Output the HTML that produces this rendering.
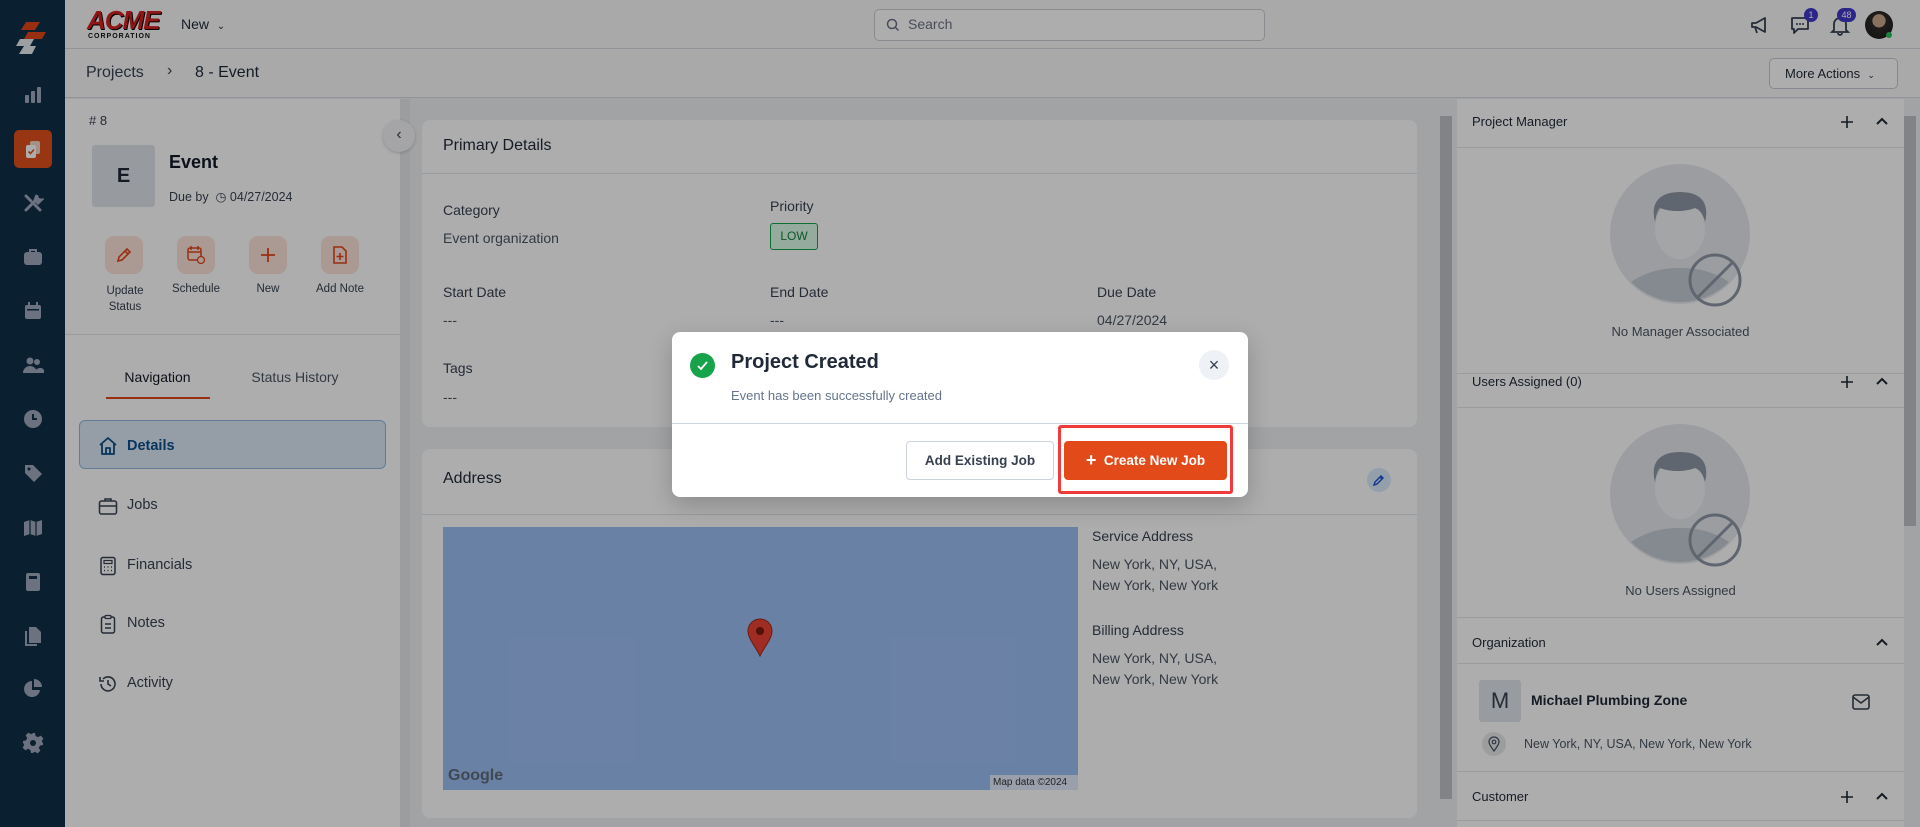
<!DOCTYPE html>
<html><head><meta charset="utf-8"><style>
*{box-sizing:border-box;margin:0;padding:0}
body{width:1920px;height:827px;overflow:hidden;font-family:"Liberation Sans",Arial,sans-serif;background:#eef0f3;position:relative;color:#1f2937}
.abs{position:absolute}
.side{left:0;top:0;width:65px;height:827px;background:#102e47}
.top{left:65px;top:0;width:1855px;height:49px;background:#f9fafb;border-bottom:1px solid #d5d9e0}
.bc{left:65px;top:49px;width:1855px;height:49px;background:#f9fafb;border-bottom:1px solid #d5d9e0}
.card{background:#fff;border-radius:8px}
.lbl{font-size:14px;color:#374151}
.val{font-size:14px;color:#4b5563}
.sicon{position:absolute;left:22px;width:22px;height:22px}
.hr{position:absolute;height:1px;background:#e2e5ea}
</style></head><body>

<!-- sidebar -->
<div class="abs side">
  <svg class="abs" style="left:14px;top:20px" width="36" height="36" viewBox="0 0 36 36"><path d="M12 2h14l-5 8H7z" fill="#e0461a"/><path d="M14 12h18l-4 7H10z" fill="#e0461a"/><path d="M6 19h14l-4 7H2z" fill="#e8ecf0"/><path d="M10 26h12l-4 8H5z" fill="#e8ecf0"/></svg>
  <svg class="sicon" style="top:84px" viewBox="0 0 22 22"><rect x="3" y="11" width="4" height="8" rx="1" fill="#9fa9bb"/><rect x="9" y="7" width="4" height="12" rx="1" fill="#9fa9bb"/><rect x="15" y="3" width="4" height="16" rx="1" fill="#9fa9bb"/></svg>
  <div class="abs" style="left:14px;top:130px;width:38px;height:38px;border-radius:5px;background:#e0501c"></div>
  <svg class="sicon" style="top:138px" viewBox="0 0 22 22"><rect x="8" y="3" width="10" height="13" rx="2" fill="#f3d5c8"/><rect x="4" y="7" width="10" height="13" rx="2" fill="#fff"/><path d="M6.5 13.5l2 2 3.5-4" stroke="#e0501c" stroke-width="1.6" fill="none"/></svg>
  <svg class="sicon" style="top:192px" viewBox="0 0 22 22"><path d="M4 18L14 8M15 3a4 4 0 0 0 4 5l-3 3-3-3zM4 4l5 5M13 13l5 5" stroke="#9fa9bb" stroke-width="3" stroke-linecap="round" fill="none"/></svg>
  <svg class="sicon" style="top:246px" viewBox="0 0 22 22"><rect x="2" y="6" width="18" height="13" rx="3" fill="#9fa9bb"/><path d="M8 6V4h6v2" stroke="#9fa9bb" stroke-width="2" fill="none"/></svg>
  <svg class="sicon" style="top:300px" viewBox="0 0 22 22"><rect x="3" y="5" width="16" height="14" rx="2" fill="#9fa9bb"/><rect x="6" y="2" width="2" height="5" fill="#9fa9bb"/><rect x="14" y="2" width="2" height="5" fill="#9fa9bb"/><rect x="5" y="9" width="12" height="1.5" fill="#102e47"/></svg>
  <svg class="sicon" style="top:354px" viewBox="0 0 22 22"><circle cx="8" cy="7" r="3.5" fill="#9fa9bb"/><circle cx="15" cy="8" r="3" fill="#9fa9bb"/><path d="M1 19a7 7 0 0 1 14 0zM13 19a5 5 0 0 1 9-3v3z" fill="#9fa9bb"/></svg>
  <svg class="sicon" style="top:408px" viewBox="0 0 22 22"><circle cx="11" cy="11" r="9" fill="#9fa9bb"/><path d="M11 6v5h4" stroke="#102e47" stroke-width="2" fill="none"/></svg>
  <svg class="sicon" style="top:462px" viewBox="0 0 22 22"><path d="M3 3h8l9 9-8 8-9-9z" fill="#9fa9bb"/><circle cx="7" cy="7" r="1.5" fill="#102e47"/></svg>
  <svg class="sicon" style="top:517px" viewBox="0 0 22 22"><path d="M2 5l6-2 6 2 6-2v14l-6 2-6-2-6 2z" fill="#9fa9bb"/><path d="M8 3v14M14 5v14" stroke="#102e47" stroke-width="1.2"/></svg>
  <svg class="sicon" style="top:571px" viewBox="0 0 22 22"><rect x="4" y="2" width="14" height="18" rx="2" fill="#9fa9bb"/><rect x="7" y="5" width="8" height="3" fill="#102e47"/></svg>
  <svg class="sicon" style="top:625px" viewBox="0 0 22 22"><path d="M7 2h7l5 5v11H7z" fill="#9fa9bb"/><path d="M4 6v14h11" stroke="#9fa9bb" stroke-width="2" fill="none"/></svg>
  <svg class="sicon" style="top:678px" viewBox="0 0 22 22"><path d="M10 3a8 8 0 1 0 8 9h-8z" fill="#9fa9bb"/><path d="M12 1a8 8 0 0 1 8 8h-8z" fill="#9fa9bb"/></svg>
  <svg class="sicon" style="top:732px" viewBox="0 0 22 22"><path d="M9 1h4l.6 3 2.4 1.2 2.6-1.6 2.8 2.8-1.6 2.6L21 11.4 21 13l-3 .6-1.2 2.4 1.6 2.6-2.8 2.8-2.6-1.6-2.4 1.2L10 21H9l-.6-3-2.4-1.2-2.6 1.6-2.8-2.8 1.6-2.6L1 10.6V9l3-.6 1.2-2.4-1.6-2.6 2.8-2.8 2.6 1.6L11.4 1z" fill="#9fa9bb"/><circle cx="11" cy="11" r="3" fill="#102e47"/></svg>
</div>

<!-- topbar -->
<div class="abs top">
  <div class="abs" style="left:22px;top:8px;font:900 26px 'Liberation Sans';color:#d51f1f;letter-spacing:-1px;font-style:italic;line-height:24px;text-shadow:1px 1px 0 #000">ACME</div>
  <div class="abs" style="left:23px;top:33px;font:900 7px 'Liberation Sans';color:#111;letter-spacing:1px">CORPORATION</div>
  <div class="abs" style="left:116px;top:16px;font-size:14px;color:#1f2937">New &nbsp;<span style="font-size:10px">&#8964;</span></div>
  <div class="abs" style="left:809px;top:9px;width:391px;height:32px;border:1px solid #c9ced6;border-radius:5px;background:#fff"></div>
  <svg class="abs" style="left:821px;top:18px" width="14" height="14" viewBox="0 0 14 14"><circle cx="6" cy="6" r="4.5" stroke="#6b7280" stroke-width="1.5" fill="none"/><path d="M9.5 9.5l3 3" stroke="#6b7280" stroke-width="1.5"/></svg>
  <div class="abs" style="left:843px;top:16px;font-size:14px;color:#6b7280">Search</div>
  <svg class="abs" style="left:1684px;top:14px" width="22" height="22" viewBox="0 0 22 22"><path d="M3 9h4l9-5v14l-9-5H3zM6 13l2 6" stroke="#374151" stroke-width="1.8" fill="none" stroke-linejoin="round"/></svg>
  <svg class="abs" style="left:1724px;top:14px" width="22" height="22" viewBox="0 0 22 22"><path d="M3 4h16v11H9l-4 4v-4H3z" stroke="#374151" stroke-width="1.8" fill="none" stroke-linejoin="round"/><circle cx="8" cy="10" r="1" fill="#374151"/><circle cx="11" cy="10" r="1" fill="#374151"/><circle cx="14" cy="10" r="1" fill="#374151"/></svg>
  <div class="abs" style="left:1739px;top:8px;width:14px;height:14px;border-radius:7px;background:#4338ca;color:#fff;font-size:9px;text-align:center;line-height:14px">1</div>
  <svg class="abs" style="left:1764px;top:14px" width="22" height="22" viewBox="0 0 22 22"><path d="M5 16V10a6 6 0 0 1 12 0v6l2 2H3zM9 19a2 2 0 0 0 4 0" stroke="#374151" stroke-width="1.8" fill="none"/></svg>
  <div class="abs" style="left:1772px;top:8px;width:19px;height:14px;border-radius:7px;background:#4338ca;color:#fff;font-size:9px;text-align:center;line-height:14px">48</div>
  <div class="abs" style="left:1800px;top:11px;width:28px;height:28px;border-radius:14px;background:radial-gradient(circle at 50% 35%,#c9a88c 0 28%,#2e2a28 30%,#1e1c1b 100%)"></div>
  <div class="abs" style="left:1821px;top:32px;width:6px;height:6px;border-radius:3px;background:#22c55e"></div>
</div>

<!-- breadcrumb -->
<div class="abs bc">
  <div class="abs" style="left:21px;top:15px;font-size:16px;color:#374151">Projects</div>
  <div class="abs" style="left:102px;top:13px;font-size:16px;color:#374151">&#8250;</div>
  <div class="abs" style="left:130px;top:15px;font-size:16px;color:#1f2937">8 - Event</div>
  <div class="abs" style="left:1704px;top:9px;width:129px;height:31px;border:1px solid #c4c9d1;border-radius:5px;background:#fff;font-size:13px;color:#1f2937;line-height:29px;padding-left:15px">More Actions &nbsp;<span style="font-size:9px">&#8964;</span></div>
</div>

<!-- left panel -->
<div class="abs" style="left:65px;top:99px;width:335px;height:728px;background:#fff"></div>
<div class="abs" style="left:400px;top:99px;width:10px;height:728px;background:#e5e7eb"></div>
<div class="abs" style="left:89px;top:113px;font-size:13px;color:#374151"># 8</div>
<div class="abs" style="left:92px;top:145px;width:63px;height:62px;background:#dfe3ea;border-radius:3px;font:bold 20px 'Liberation Sans';line-height:62px;color:#1f2937;text-align:center">E</div>
<div class="abs" style="left:169px;top:152px;font:bold 18px 'Liberation Sans';color:#111827">Event</div>
<div class="abs" style="left:169px;top:189px;font-size:12.5px;color:#374151">Due by &nbsp;&#9719; 04/27/2024</div>
<div class="abs" style="left:105px;top:236px;width:38px;height:38px;border-radius:9px;background:#fde3d9"></div>
<div class="abs" style="left:177px;top:236px;width:38px;height:38px;border-radius:9px;background:#fde3d9"></div>
<div class="abs" style="left:249px;top:236px;width:38px;height:38px;border-radius:9px;background:#fde3d9"></div>
<div class="abs" style="left:321px;top:236px;width:38px;height:38px;border-radius:9px;background:#fde3d9"></div>
<svg class="abs" style="left:115px;top:246px" width="18" height="18" viewBox="0 0 18 18"><path d="M3 15l1-4 8-8 3 3-8 8zM10 5l3 3" stroke="#e0461a" stroke-width="1.6" fill="none"/></svg>
<svg class="abs" style="left:186px;top:245px" width="20" height="20" viewBox="0 0 20 20"><rect x="2" y="3" width="13" height="12" rx="2" stroke="#e0461a" stroke-width="1.5" fill="none"/><path d="M2 7h13M5 1v4M12 1v4" stroke="#e0461a" stroke-width="1.5"/><circle cx="15" cy="15" r="3.5" fill="#fde3d9" stroke="#e0461a" stroke-width="1.3"/></svg>
<svg class="abs" style="left:259px;top:246px" width="18" height="18" viewBox="0 0 18 18"><path d="M9 2v14M2 9h14" stroke="#e0461a" stroke-width="1.8"/></svg>
<svg class="abs" style="left:331px;top:245px" width="18" height="20" viewBox="0 0 18 20"><path d="M3 2h8l4 4v12H3z" stroke="#e0461a" stroke-width="1.6" fill="none"/><path d="M9 8v7M5.5 11.5h7" stroke="#e0461a" stroke-width="1.6"/></svg>
<div class="abs" style="left:95px;top:283px;width:60px;text-align:center;font-size:11.5px;color:#374151;line-height:16px">Update<br>Status</div>
<div class="abs" style="left:166px;top:283px;width:60px;text-align:center;font-size:11.5px;color:#374151">Schedule</div>
<div class="abs" style="left:238px;top:283px;width:60px;text-align:center;font-size:11.5px;color:#374151">New</div>
<div class="abs" style="left:310px;top:283px;width:60px;text-align:center;font-size:11.5px;color:#374151">Add Note</div>
<div class="hr" style="left:65px;top:334px;width:335px"></div>
<div class="abs" style="left:106px;top:369px;width:103px;text-align:center;font-size:14px;color:#111827">Navigation</div>
<div class="abs" style="left:106px;top:397px;width:104px;height:2px;background:#e0461a"></div>
<div class="abs" style="left:240px;top:369px;width:110px;text-align:center;font-size:14px;color:#4b5563">Status History</div>
<div class="abs" style="left:79px;top:420px;width:307px;height:49px;border:1px solid #90b7e0;border-radius:6px;background:#dce8f5"></div>
<svg class="abs" style="left:98px;top:436px" width="20" height="20" viewBox="0 0 20 20"><path d="M2 9l8-7 8 7M4 8v10h12V8M8 18v-6h4v6" stroke="#0b4f8a" stroke-width="1.8" fill="none" stroke-linejoin="round"/></svg>
<div class="abs" style="left:127px;top:438px;font-size:14.5px;color:#0b4f8a;font-weight:bold">Details</div>
<svg class="abs" style="left:98px;top:496px" width="20" height="20" viewBox="0 0 20 20"><rect x="1.5" y="5" width="17" height="13" rx="2" stroke="#374151" stroke-width="1.5" fill="none"/><path d="M7 5V3h6v2M1.5 10h17" stroke="#374151" stroke-width="1.5" fill="none"/></svg>
<div class="abs" style="left:127px;top:497px;font-size:14.5px;color:#374151">Jobs</div>
<svg class="abs" style="left:98px;top:556px" width="20" height="20" viewBox="0 0 20 20"><rect x="3" y="1.5" width="14" height="17" rx="2" stroke="#374151" stroke-width="1.5" fill="none"/><rect x="6" y="4.5" width="8" height="3" stroke="#374151" stroke-width="1.2" fill="none"/><path d="M6 11h1M9.5 11h1M13 11h1M6 14.5h1M9.5 14.5h1M13 14.5h1" stroke="#374151" stroke-width="1.5"/></svg>
<div class="abs" style="left:127px;top:557px;font-size:14.5px;color:#374151">Financials</div>
<svg class="abs" style="left:98px;top:614px" width="20" height="20" viewBox="0 0 20 20"><rect x="3.5" y="3" width="13" height="16" rx="2" stroke="#374151" stroke-width="1.5" fill="none"/><rect x="7" y="1.5" width="6" height="3" rx="1" stroke="#374151" stroke-width="1.3" fill="#fff"/><path d="M7 10h6M7 14h6" stroke="#374151" stroke-width="1.5"/></svg>
<div class="abs" style="left:127px;top:615px;font-size:14.5px;color:#374151">Notes</div>
<svg class="abs" style="left:98px;top:674px" width="20" height="20" viewBox="0 0 20 20"><path d="M3 10a7 7 0 1 0 2-5M2 3v4h4M10 6v4l3 2" stroke="#374151" stroke-width="1.6" fill="none"/></svg>
<div class="abs" style="left:127px;top:675px;font-size:14.5px;color:#374151">Activity</div>
<div class="abs" style="left:383px;top:120px;width:32px;height:32px;border-radius:16px;background:#f3f4f6;box-shadow:0 1px 3px rgba(0,0,0,.2);text-align:center;line-height:30px;font-size:16px;color:#374151">&#8249;</div>

<!-- main cards -->
<div class="abs card" style="left:422px;top:120px;width:995px;height:307px"></div>
<div class="abs" style="left:443px;top:137px;font-size:16px;color:#1f2937">Primary Details</div>
<div class="hr" style="left:422px;top:173px;width:995px"></div>
<div class="abs lbl" style="left:443px;top:202px">Category</div>
<div class="abs val" style="left:443px;top:230px">Event organization</div>
<div class="abs lbl" style="left:770px;top:198px">Priority</div>
<div class="abs" style="left:770px;top:223px;width:48px;height:27px;border:1px solid #16a34a;background:#dcfce7;border-radius:3px;color:#15803d;font-size:12px;text-align:center;line-height:25px">LOW</div>
<div class="abs lbl" style="left:443px;top:284px">Start Date</div>
<div class="abs val" style="left:443px;top:312px">---</div>
<div class="abs lbl" style="left:770px;top:284px">End Date</div>
<div class="abs val" style="left:770px;top:312px">---</div>
<div class="abs lbl" style="left:1097px;top:284px">Due Date</div>
<div class="abs val" style="left:1097px;top:312px">04/27/2024</div>
<div class="abs lbl" style="left:443px;top:360px">Tags</div>
<div class="abs val" style="left:443px;top:389px">---</div>

<div class="abs card" style="left:422px;top:449px;width:995px;height:369px"></div>
<div class="abs" style="left:443px;top:470px;font-size:16px;color:#1f2937">Address</div>
<div class="abs" style="left:1367px;top:468px;width:24px;height:24px;border-radius:12px;background:#dbeafe"></div>
<svg class="abs" style="left:1372px;top:473px" width="14" height="14" viewBox="0 0 14 14"><path d="M2 12l1-3 6-6 2 2-6 6zM8 4l2 2" stroke="#1d4ed8" stroke-width="1.4" fill="none"/></svg>
<div class="hr" style="left:422px;top:514px;width:995px"></div>
<div class="abs" style="left:443px;top:527px;width:635px;height:263px;background:#9dbef5"></div>
<svg class="abs" style="left:746px;top:617px" width="28" height="40" viewBox="0 0 28 40"><path d="M14 39C10 30 2 22 2 14a12 12 0 0 1 24 0c0 8-8 16-12 25z" fill="#ea4335" stroke="#a52714" stroke-width="1"/><circle cx="14" cy="14" r="4" fill="#7a1a0e"/></svg>
<div class="abs" style="left:448px;top:767px;font:bold 16px 'Liberation Sans';color:#5f6b7a">Google</div>
<div class="abs" style="left:990px;top:775px;width:88px;height:15px;background:rgba(255,255,255,.7);font-size:10px;color:#333;line-height:15px;padding-left:3px">Map data ©2024</div>
<div class="abs lbl" style="left:1092px;top:528px">Service Address</div>
<div class="abs val" style="left:1092px;top:554px;line-height:21px">New York, NY, USA,<br>New York, New York</div>
<div class="abs lbl" style="left:1092px;top:622px">Billing Address</div>
<div class="abs val" style="left:1092px;top:648px;line-height:21px">New York, NY, USA,<br>New York, New York</div>

<!-- scrollbars -->
<div class="abs" style="left:1440px;top:116px;width:12px;height:683px;background:#c0c2c6"></div>
<div class="abs" style="left:1904px;top:116px;width:12px;height:410px;background:#c0c2c6"></div>

<!-- right panel -->
<div class="abs" style="left:1457px;top:99px;width:447px;height:728px;background:#fff"></div>
<div class="abs" style="left:1472px;top:114px;font-size:13px;color:#1f2937">Project Manager</div>
<svg class="abs" style="left:1840px;top:115px" width="14" height="14" viewBox="0 0 14 14"><path d="M7 1v12M1 7h12" stroke="#1f2937" stroke-width="1.6"/></svg>
<svg class="abs" style="left:1876px;top:117px" width="12" height="8" viewBox="0 0 12 8"><path d="M1 7l5-5 5 5" stroke="#1f2937" stroke-width="2" fill="none"/></svg>
<div class="hr" style="left:1457px;top:147px;width:447px"></div>
<svg class="abs" style="left:1609px;top:164px" width="150" height="145" viewBox="0 0 150 145"><circle cx="71" cy="70" r="70" fill="#e5e8ee"/><path d="M22 118c15-10 30-14 49-14s34 4 49 14a70 70 0 0 1-98 0z" fill="#c4cad4"/><ellipse cx="71" cy="65" rx="25" ry="30" fill="#f2f3f6"/><path d="M46 58c-5-20 5-30 25-30s30 10 25 30c-2-8-5-12-10-14-10 4-25 4-35 0-3 4-4 8-5 14z" fill="#8e97a6"/><circle cx="106" cy="116" r="25" fill="none" stroke="#8e97a6" stroke-width="3"/><path d="M88 134l36-36" stroke="#8e97a6" stroke-width="3"/></svg>
<div class="abs" style="left:1457px;top:324px;width:447px;text-align:center;font-size:13px;color:#4b5563">No Manager Associated</div>
<div class="hr" style="left:1457px;top:373px;width:447px"></div>
<div class="abs" style="left:1472px;top:374px;font-size:13px;color:#1f2937">Users Assigned (0)</div>
<svg class="abs" style="left:1840px;top:375px" width="14" height="14" viewBox="0 0 14 14"><path d="M7 1v12M1 7h12" stroke="#1f2937" stroke-width="1.6"/></svg>
<svg class="abs" style="left:1876px;top:377px" width="12" height="8" viewBox="0 0 12 8"><path d="M1 7l5-5 5 5" stroke="#1f2937" stroke-width="2" fill="none"/></svg>
<div class="hr" style="left:1457px;top:407px;width:447px"></div>
<svg class="abs" style="left:1609px;top:424px" width="150" height="145" viewBox="0 0 150 145"><circle cx="71" cy="70" r="70" fill="#e5e8ee"/><path d="M22 118c15-10 30-14 49-14s34 4 49 14a70 70 0 0 1-98 0z" fill="#c4cad4"/><ellipse cx="71" cy="65" rx="25" ry="30" fill="#f2f3f6"/><path d="M46 58c-5-20 5-30 25-30s30 10 25 30c-2-8-5-12-10-14-10 4-25 4-35 0-3 4-4 8-5 14z" fill="#8e97a6"/><circle cx="106" cy="116" r="25" fill="none" stroke="#8e97a6" stroke-width="3"/><path d="M88 134l36-36" stroke="#8e97a6" stroke-width="3"/></svg>
<div class="abs" style="left:1457px;top:583px;width:447px;text-align:center;font-size:13px;color:#4b5563">No Users Assigned</div>
<div class="hr" style="left:1457px;top:617px;width:447px"></div>
<div class="abs" style="left:1472px;top:635px;font-size:13px;color:#1f2937">Organization</div>
<svg class="abs" style="left:1876px;top:638px" width="12" height="8" viewBox="0 0 12 8"><path d="M1 7l5-5 5 5" stroke="#1f2937" stroke-width="2" fill="none"/></svg>
<div class="hr" style="left:1457px;top:663px;width:447px"></div>
<div class="abs" style="left:1479px;top:680px;width:42px;height:42px;background:#e1e5eb;border-radius:3px;font-size:22px;color:#374151;text-align:center;line-height:42px">M</div>
<div class="abs" style="left:1531px;top:692px;font:bold 14px 'Liberation Sans';color:#1f2937">Michael Plumbing Zone</div>
<svg class="abs" style="left:1851px;top:693px" width="20" height="18" viewBox="0 0 20 18"><rect x="2" y="2" width="16" height="14" rx="2" stroke="#374151" stroke-width="1.6" fill="none"/><path d="M2 4l8 6 8-6" stroke="#374151" stroke-width="1.6" fill="none"/></svg>
<div class="abs" style="left:1482px;top:732px;width:24px;height:24px;border-radius:12px;background:#e5e7eb"></div>
<svg class="abs" style="left:1488px;top:736px" width="12" height="16" viewBox="0 0 12 16"><path d="M6 15C3 11 1 8 1 6a5 5 0 0 1 10 0c0 2-2 5-5 9z" stroke="#4b5563" stroke-width="1.3" fill="none"/><circle cx="6" cy="6" r="1.8" stroke="#4b5563" stroke-width="1.2" fill="none"/></svg>
<div class="abs" style="left:1524px;top:737px;font-size:12.5px;color:#4b5563">New York, NY, USA, New York, New York</div>
<div class="hr" style="left:1457px;top:771px;width:447px"></div>
<div class="abs" style="left:1472px;top:789px;font-size:13px;color:#1f2937">Customer</div>
<svg class="abs" style="left:1840px;top:790px" width="14" height="14" viewBox="0 0 14 14"><path d="M7 1v12M1 7h12" stroke="#1f2937" stroke-width="1.6"/></svg>
<svg class="abs" style="left:1876px;top:792px" width="12" height="8" viewBox="0 0 12 8"><path d="M1 7l5-5 5 5" stroke="#1f2937" stroke-width="2" fill="none"/></svg>
<div class="hr" style="left:1457px;top:820px;width:447px"></div>

<!-- overlay -->
<div class="abs" style="left:0;top:0;width:1920px;height:827px;background:rgba(0,0,0,.32)"></div>

<!-- modal -->
<div class="abs" style="left:672px;top:332px;width:576px;height:165px;background:#fff;border-radius:8px;box-shadow:0 8px 24px rgba(0,0,0,.2)"></div>
<div class="abs" style="left:690px;top:353px;width:25px;height:25px;border-radius:13px;background:#16a34a"></div>
<svg class="abs" style="left:695px;top:358px" width="15" height="15" viewBox="0 0 15 15"><path d="M3 8l3 3 6-7" stroke="#fff" stroke-width="1.8" fill="none"/></svg>
<div class="abs" style="left:731px;top:351px;font:bold 20px 'Liberation Sans';color:#1f2937">Project Created</div>
<div class="abs" style="left:731px;top:388px;font-size:13px;color:#64748b">Event has been successfully created</div>
<div class="abs" style="left:1199px;top:350px;width:30px;height:30px;border-radius:15px;background:#eef1f5;text-align:center;line-height:30px;font-size:18px;color:#334155">&#215;</div>
<div class="abs" style="left:672px;top:423px;width:576px;height:1px;background:#cfd5dd"></div>
<div class="abs" style="left:906px;top:441px;width:148px;height:39px;border:1px solid #cdd3db;border-radius:4px;background:#fff;text-align:center;font:bold 13.5px 'Liberation Sans';line-height:37px;color:#374151">Add Existing Job</div>
<div class="abs" style="left:1058px;top:425px;width:175px;height:69px;border:3px solid #ef3b3b;border-radius:3px"></div>
<div class="abs" style="left:1064px;top:441px;width:163px;height:39px;border-radius:4px;background:#e34a19;text-align:center;font:bold 13.5px 'Liberation Sans';line-height:39px;color:#fff"><span style="font-size:18px;vertical-align:-1px">+</span>&nbsp; Create New Job</div>
</body></html>
